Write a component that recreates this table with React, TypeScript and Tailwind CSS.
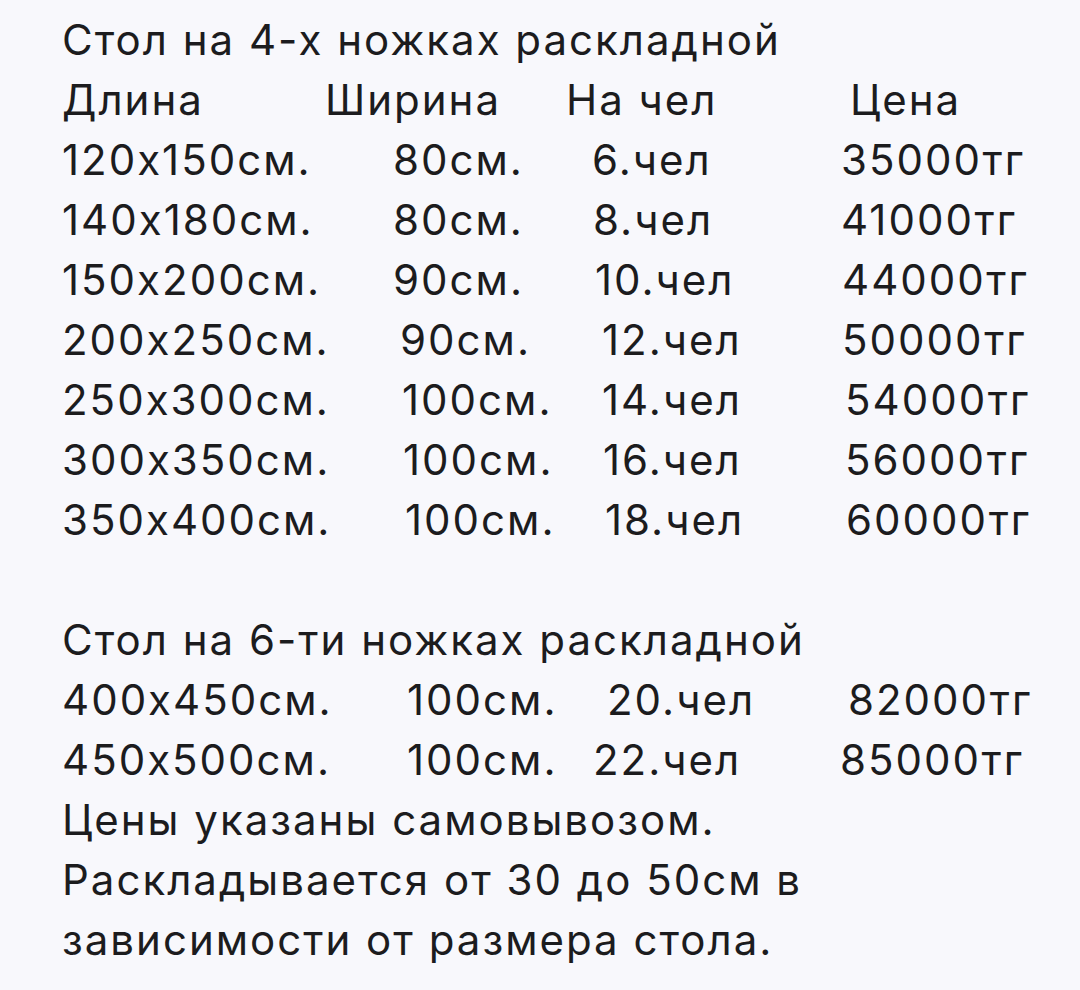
import React from 'react'

type Cell = { text: string; cls: string }
type Row = [Cell, Cell, Cell, Cell]

const row = (a: string, b: string, bCls: string, c: string, cCls: string, d: string, dCls: string): Row => [
  { text: a, cls: '' },
  { text: b, cls: bCls },
  { text: c, cls: cCls },
  { text: d, cls: dCls },
]

const fourLegs: Row[] = [
  row('Длина', 'Ширина', 'pl-0', 'На чел', 'pl-[1px]', 'Цена', 'pl-[10px]'),
  row('120x150см.', '80см.', 'pl-[68px]', '6.чел', 'pl-[27px]', '35000тг', 'pl-[1px]'),
  row('140x180см.', '80см.', 'pl-[68px]', '8.чел', 'pl-[28px]', '41000тг', 'pl-[1px]'),
  row('150x200см.', '90см.', 'pl-[68px]', '10.чел', 'pl-[30px]', '44000тг', 'pl-[2px]'),
  row('200x250см.', '90см.', 'pl-[75px]', '12.чел', 'pl-[37px]', '50000тг', 'pl-[2px]'),
  row('250x300см.', '100см.', 'pl-[77px]', '14.чел', 'pl-[37px]', '54000тг', 'pl-[5px]'),
  row('300x350см.', '100см.', 'pl-[78px]', '16.чел', 'pl-[38px]', '56000тг', 'pl-[5px]'),
  row('350x400см.', '100см.', 'pl-[80px]', '18.чел', 'pl-[40px]', '60000тг', 'pl-[6px]'),
]

const sixLegs: Row[] = [
  row('400x450см.', '100см.', 'pl-[82px]', '20.чел', 'pl-[42px]', '82000тг', 'pl-[8px]'),
  row('450x500см.', '100см.', 'pl-[82px]', '22.чел', 'pl-[28px]', '85000тг', 'pl-0'),
]

function PriceRows({ rows }: { rows: Row[] }) {
  return (
    <>
      {rows.map((r, i) => (
        <div key={i} className="grid grid-cols-[263px_240px_275px_1fr] whitespace-nowrap">
          {r.map((cell, j) => (
            <span key={j} className={cell.cls}>
              {cell.text}
            </span>
          ))}
        </div>
      ))}
    </>
  )
}

export default function App() {
  return (
    <div
      className="h-[990px] w-full overflow-hidden bg-[#f8f8fc] pl-[62px] pt-[10px] text-[42px] leading-[60px] tracking-[2px] text-[#1c1c1e] [font-feature-settings:'calt'_0]"
      style={{ fontFamily: 'Inter, "Noto Sans", sans-serif' }}
    >
      <div>Стол на 4-х ножках раскладной</div>
      <PriceRows rows={fourLegs} />

      {/* second table */}
      <div className="mt-[60px]">Стол на 6-ти ножках раскладной</div>
      <PriceRows rows={sixLegs} />
      <div>Цены указаны самовывозом.</div>
      <div>Раскладывается от 30 до 50см в</div>
      <div>зависимости от размера стола.</div>
    </div>
  )
}
